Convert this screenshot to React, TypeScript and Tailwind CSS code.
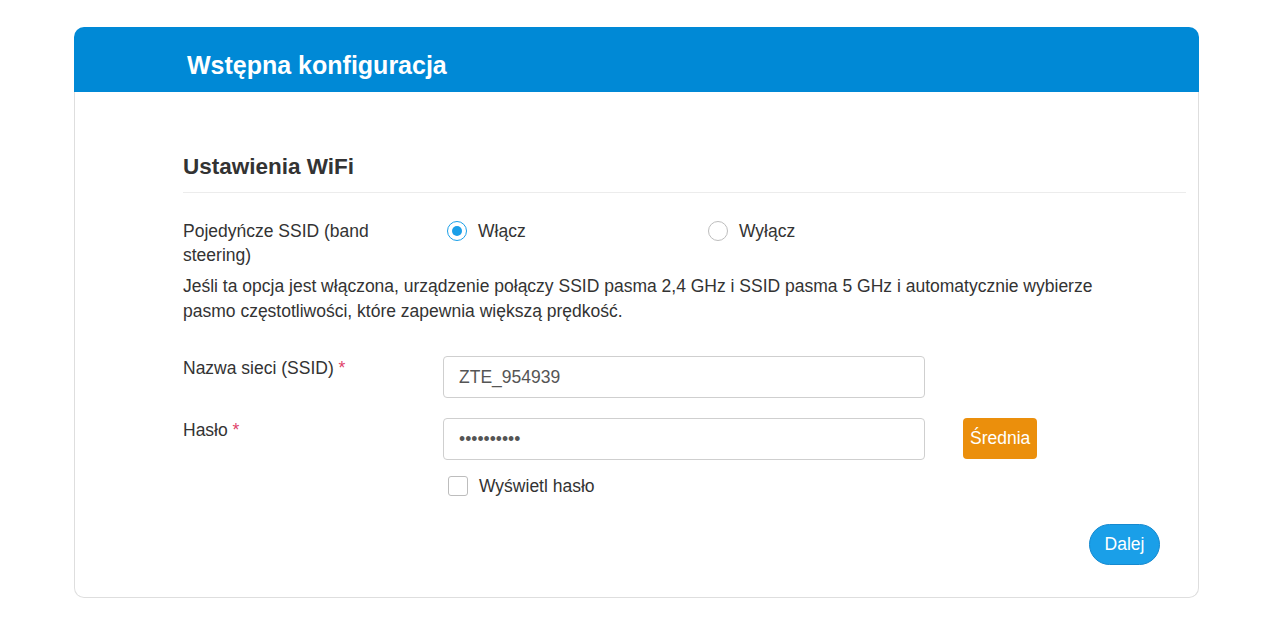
import { useState } from 'react';

// Radio drawn as spans so the ring and dot match the router UI
function Radio({ checked, label, onClick }: { checked: boolean; label: string; onClick: () => void }) {
  return (
    <button type="button" onClick={onClick} className="flex items-center gap-[11px] text-[17.5px] leading-6 text-[#333]">
      <span
        className={
          checked
            ? 'flex h-5 w-5 items-center justify-center rounded-full border border-[#1a9fe8] bg-white'
            : 'flex h-5 w-5 items-center justify-center rounded-full border border-[#bdbdbd] bg-white'
        }
      >
        {checked && <span className="h-[10px] w-[10px] rounded-full bg-[#1a9fe8]" />}
      </span>
      {label}
    </button>
  );
}

export default function App() {
  const [single, setSingle] = useState(true);
  const [ssid, setSsid] = useState('ZTE_954939');
  const [password, setPassword] = useState('abcdefghij');
  const [showPass, setShowPass] = useState(false);

  return (
    <div className="min-h-screen bg-white pt-[27px] font-['Liberation_Sans',Arial,sans-serif] text-[#333]">
      <div className="ml-[74px] w-[1125px]">
        <header className="flex h-[65px] items-center rounded-t-[10px] bg-[#0089d6] pl-[113px] pt-[12px]">
          <h1 className="text-[25px] font-bold leading-none text-white">Wstępna konfiguracja</h1>
        </header>

        <div className="rounded-b-[10px] border-x border-b border-[#dedede] pb-[32px] pl-[108px] pr-[12px] pt-[60px]">
          <h2 className="border-b border-[#ececec] pb-[10px] text-[22.5px] font-bold leading-[30px] text-[#333]">
            Ustawienia WiFi
          </h2>

          {/* band steering */}
          <div className="mt-[26px] flex items-start">
            <div className="w-[260px] text-[17.5px] leading-6">
              Pojedyńcze SSID (band
              <br />
              steering)
            </div>
            <div className="flex w-[261px] pl-[4px]">
              <Radio checked={single} label="Włącz" onClick={() => setSingle(true)} />
            </div>
            <div className="flex pl-[4px]">
              <Radio checked={!single} label="Wyłącz" onClick={() => setSingle(false)} />
            </div>
          </div>
          <p className="mt-[7px] w-[940px] text-[17.5px] leading-[25px]">
            Jeśli ta opcja jest włączona, urządzenie połączy SSID pasma 2,4 GHz i SSID pasma 5 GHz i automatycznie wybierze
            pasmo częstotliwości, które zapewnia większą prędkość.
          </p>

          {/* SSID */}
          <div className="mt-[32px] flex items-start">
            <label className="w-[260px] text-[17.5px] leading-6">
              Nazwa sieci (SSID) <span className="text-[#e0436b]">*</span>
            </label>
            <input
              value={ssid}
              onChange={(e) => setSsid(e.target.value)}
              className="h-[42px] w-[482px] rounded-[4px] border border-[#cfcfcf] px-[15px] text-[17.5px] text-[#555] outline-none"
            />
          </div>

          {/* password */}
          <div className="mt-[20px] flex items-start">
            <label className="w-[260px] text-[17.5px] leading-6">
              Hasło <span className="text-[#e0436b]">*</span>
            </label>
            <input
              type={showPass ? 'text' : 'password'}
              value={password}
              onChange={(e) => setPassword(e.target.value)}
              className="h-[42px] w-[482px] rounded-[4px] border border-[#cfcfcf] px-[15px] text-[17.5px] text-[#555] outline-none"
            />
            <span className="ml-[38px] flex h-[41px] items-center rounded-[4px] bg-[#eb8f0c] px-[7px] text-[17.5px] text-white">
              Średnia
            </span>
          </div>

          <div className="mt-[14px] flex pl-[265px]">
            <button
              type="button"
              onClick={() => setShowPass(!showPass)}
              className="flex items-center gap-[11px] text-[17.5px] leading-6 text-[#333]"
            >
              <span className="flex h-[20px] w-[20px] items-center justify-center rounded-[3px] border border-[#bdbdbd] bg-white text-[13px] text-[#1a9fe8]">
                {showPass ? '✓' : ''}
              </span>
              Wyświetl hasło
            </button>
          </div>

          <div className="mt-[26px] flex justify-end pr-[26px]">
            <button
              type="button"
              className="h-[41px] w-[71px] rounded-full border border-[#1689cf] bg-[#1a9fe8] text-[17.5px] text-white"
            >
              Dalej
            </button>
          </div>
        </div>
      </div>
    </div>
  );
}
